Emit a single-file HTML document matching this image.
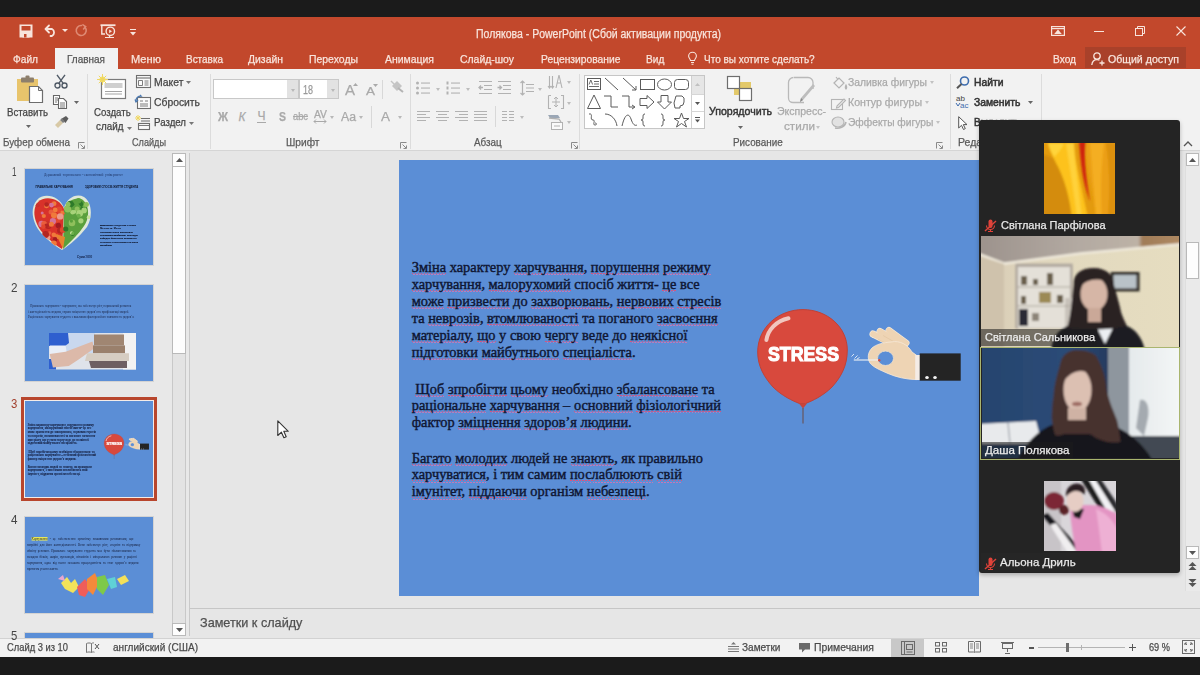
<!DOCTYPE html>
<html><head><meta charset="utf-8">
<style>
*{margin:0;padding:0;box-sizing:border-box}
html,body{width:1200px;height:675px;overflow:hidden;background:#1b1b1b;font-family:"Liberation Sans",sans-serif}
.a{position:absolute}
.t{position:absolute;white-space:nowrap;line-height:1;transform-origin:0 0;-webkit-text-stroke-width:0.25px}
svg{position:absolute;overflow:visible}
</style></head><body>
<style>
.sl{position:absolute;white-space:pre;line-height:1;font-family:'Liberation Serif',serif;font-size:14.4px;color:#0f1633;-webkit-text-stroke:0.4px #0f1633}
.u{background-image:repeating-linear-gradient(90deg,#d9537f 0 1.5px,rgba(0,0,0,0) 1.5px 3px),repeating-linear-gradient(90deg,rgba(0,0,0,0) 0 1.5px,#c07ab8 1.5px 3px);background-size:100% 1.2px,100% 1.2px;background-position:0 calc(100% - 1.6px),0 calc(100% - 0.4px);background-repeat:no-repeat;padding-bottom:0.8px}
</style>
<div class="a" style="left:0;top:17px;width:1200px;height:52px;background:#c2482c"></div>
<div class="a" style="left:55px;top:48px;width:63px;height:22px;background:#f2f2f2"></div>
<div class="a" style="left:1085px;top:47px;width:101px;height:21px;background:#a9412a"></div>
<div class="a" style="left:0;top:69px;width:1200px;height:82px;background:#f2f2f2;border-bottom:1px solid #d5d5d5"></div>
<div class="a" style="left:0;top:151px;width:190px;height:487px;background:#e8e8e8"></div>
<div class="a" style="left:190px;top:151px;width:1010px;height:487px;background:#e6e6e6"></div>
<div class="a" style="left:0;top:638px;width:1200px;height:19px;background:#f2f2f2;border-top:1px solid #d2d2d2"></div>
<svg style="left:19px;top:24px" width="14" height="14" viewBox="0 0 14 14">
<rect x="0.5" y="0.5" width="13" height="13" fill="#f8e4dc"/>
<rect x="2.5" y="2" width="9" height="4.5" fill="#c2482c"/>
<rect x="3.5" y="9" width="7" height="4.5" fill="#f8e4dc"/>
<rect x="5" y="10" width="2.5" height="3.5" fill="#c2482c"/>
</svg>
<svg style="left:44px;top:24px" width="14" height="13" viewBox="0 0 14 13" fill="none" stroke="#f8e4dc" stroke-width="1.8" stroke-linecap="round" stroke-linejoin="round">
<path d="M5 1.5L1.5 5L5 8.5"/><path d="M1.8 5H8a4 4 0 0 1 0 7H6.5"/></svg>
<svg style="left:62px;top:29px" width="6" height="3" viewBox="0 0 6 3"><path d="M0 0H6L3 3z" fill="#f8e4dc"/></svg>
<svg style="left:75px;top:24px" width="13" height="13" viewBox="0 0 13 13" fill="none" stroke="#df8a74" stroke-width="1.6" stroke-linecap="round">
<path d="M9.8 3A5 5 0 1 1 6.5 1.5"/><path d="M8 0.8L10.6 2.6L8.6 5"/></svg>
<svg style="left:100px;top:24px" width="16" height="15" viewBox="0 0 16 15" fill="none" stroke="#f8e4dc" stroke-width="1.4">
<path d="M0.5 1.2H15.5" stroke-width="1.8"/><path d="M1.8 1.5V10H5"/><circle cx="10.3" cy="7.3" r="4.2"/><path d="M9.2 5.4V9.2L12 7.3z" fill="#f8e4dc" stroke="none"/><path d="M5 13.5H14M9.5 11.5V13.5" stroke-width="1.2"/></svg>
<svg style="left:130px;top:29px" width="6" height="7" viewBox="0 0 6 7"><path d="M0 0.5H6" stroke="#f8e4dc" stroke-width="1"/><path d="M0 3H6L3 6.5z" fill="#f8e4dc"/></svg>
<span class="t" style="left:476.3px;top:28.14px;font-size:12px;color:#f8e4dc;font-weight:400;font-family:'Liberation Sans',sans-serif;transform:scaleX(0.8753);">Полякова - PowerPoint (Сбой активации продукта)</span>
<svg style="left:1051px;top:26px" width="14" height="10" viewBox="0 0 14 10" fill="none" stroke="#f8e4dc" stroke-width="1.2">
<rect x="0.6" y="0.6" width="12.8" height="8.8"/><path d="M0.6 2.6H13.4"/><path d="M4.5 7.5L7 4.5L9.5 7.5z" fill="#f8e4dc"/></svg>
<div class="a" style="left:1094px;top:31px;width:10px;height:1px;background:#f8e4dc"></div>
<svg style="left:1135px;top:26px" width="10" height="10" viewBox="0 0 10 10" fill="none" stroke="#f8e4dc" stroke-width="1">
<rect x="0.5" y="2.5" width="7" height="7"/><path d="M2.5 2.5V0.5H9.5V7.5H7.5"/></svg>
<svg style="left:1176px;top:26px" width="10" height="10" viewBox="0 0 10 10" stroke="#f8e4dc" stroke-width="1.1"><path d="M0.5 0.5L9.5 9.5M9.5 0.5L0.5 9.5"/></svg>
<span class="t" style="left:13.0px;top:53.99px;font-size:11px;color:#f8e4dc;font-weight:400;font-family:'Liberation Sans',sans-serif;transform:scaleX(0.9243);">Файл</span>
<span class="t" style="left:67.0px;top:53.99px;font-size:11px;color:#555555;font-weight:400;font-family:'Liberation Sans',sans-serif;transform:scaleX(0.9075);">Главная</span>
<span class="t" style="left:131.0px;top:53.99px;font-size:11px;color:#f8e4dc;font-weight:400;font-family:'Liberation Sans',sans-serif;transform:scaleX(1.0089);">Меню</span>
<span class="t" style="left:186.0px;top:53.99px;font-size:11px;color:#f8e4dc;font-weight:400;font-family:'Liberation Sans',sans-serif;transform:scaleX(0.9049);">Вставка</span>
<span class="t" style="left:248.0px;top:53.99px;font-size:11px;color:#f8e4dc;font-weight:400;font-family:'Liberation Sans',sans-serif;transform:scaleX(0.9463);">Дизайн</span>
<span class="t" style="left:309.0px;top:53.99px;font-size:11px;color:#f8e4dc;font-weight:400;font-family:'Liberation Sans',sans-serif;transform:scaleX(0.9494);">Переходы</span>
<span class="t" style="left:384.5px;top:53.99px;font-size:11px;color:#f8e4dc;font-weight:400;font-family:'Liberation Sans',sans-serif;transform:scaleX(0.9489);">Анимация</span>
<span class="t" style="left:460.0px;top:53.99px;font-size:11px;color:#f8e4dc;font-weight:400;font-family:'Liberation Sans',sans-serif;transform:scaleX(0.9468);">Слайд-шоу</span>
<span class="t" style="left:540.5px;top:53.99px;font-size:11px;color:#f8e4dc;font-weight:400;font-family:'Liberation Sans',sans-serif;transform:scaleX(0.9358);">Рецензирование</span>
<span class="t" style="left:645.5px;top:53.99px;font-size:11px;color:#f8e4dc;font-weight:400;font-family:'Liberation Sans',sans-serif;transform:scaleX(0.9193);">Вид</span>
<span class="t" style="left:704.3px;top:53.99px;font-size:11px;color:#f8e4dc;font-weight:400;font-family:'Liberation Sans',sans-serif;transform:scaleX(0.9103);">Что вы хотите сделать?</span>
<svg style="left:688px;top:52px" width="9" height="13" viewBox="0 0 9 13" fill="none" stroke="#f8e4dc" stroke-width="1.1">
<path d="M2.5 8.5C2.3 6.8 0.6 5.9 0.6 4.1A3.9 3.9 0 0 1 8.4 4.1C8.4 5.9 6.7 6.8 6.5 8.5z"/><path d="M3 10.5H6M3.5 12.2H5.5"/></svg>
<span class="t" style="left:1053.0px;top:53.99px;font-size:11px;color:#f8e4dc;font-weight:400;font-family:'Liberation Sans',sans-serif;transform:scaleX(0.9240);">Вход</span>
<span class="t" style="left:1107.5px;top:53.99px;font-size:11px;color:#f8e4dc;font-weight:400;font-family:'Liberation Sans',sans-serif;transform:scaleX(0.9607);">Общий доступ</span>
<svg style="left:1091px;top:52px" width="14" height="14" viewBox="0 0 14 14" fill="none" stroke="#f8e4dc" stroke-width="1.3">
<circle cx="6" cy="4" r="3.2"/><path d="M0.8 13C1.2 9.5 3.3 7.6 6 7.6C7 7.6 7.8 7.8 8.5 8.3"/><path d="M11 8.5V13.5M8.5 11H13.5"/></svg>
<div class="a" style="left:87px;top:74px;width:1px;height:75px;background:#dcdcdc"></div>
<div class="a" style="left:210px;top:74px;width:1px;height:75px;background:#dcdcdc"></div>
<div class="a" style="left:410px;top:74px;width:1px;height:75px;background:#dcdcdc"></div>
<div class="a" style="left:579px;top:74px;width:1px;height:75px;background:#dcdcdc"></div>
<div class="a" style="left:950px;top:74px;width:1px;height:75px;background:#dcdcdc"></div>
<div class="a" style="left:1041px;top:74px;width:1px;height:75px;background:#dcdcdc"></div>
<svg style="left:16px;top:75px" width="28" height="29" viewBox="0 0 28 29">
<rect x="1" y="4" width="21" height="22" fill="#e8c46c"/>
<rect x="5" y="2.5" width="13" height="5" rx="1" fill="#8d7f6c"/>
<rect x="9.5" y="0.5" width="4" height="3" rx="1" fill="#8d7f6c"/>
<path d="M13.5 11.5H22.5L26.5 15.5V27.5H13.5z" fill="#fff" stroke="#6d6d6d" stroke-width="1.2"/>
<path d="M22.5 11.5V15.5H26.5" fill="none" stroke="#6d6d6d" stroke-width="1"/>
</svg>
<span class="t" style="left:6.8px;top:106.69px;font-size:11px;color:#444444;font-weight:400;font-family:'Liberation Sans',sans-serif;transform:scaleX(0.8791);">Вставить</span>
<svg style="left:25.5px;top:125.0px" width="5" height="3" viewBox="0 0 5 3"><path d="M0 0H5L2.5 3z" fill="#666"/></svg>
<svg style="left:54px;top:74px" width="14" height="15" viewBox="0 0 14 15" fill="none" stroke="#505a66" stroke-width="1.4">
<circle cx="3.5" cy="11.5" r="2.5"/><circle cx="10.5" cy="11.5" r="2.5"/><path d="M4.8 9.3L11 0.8M9.2 9.3L3 0.8"/></svg>
<svg style="left:53px;top:95px" width="15" height="14" viewBox="0 0 15 14" fill="none" stroke="#666" stroke-width="1.1">
<path d="M0.5 0.5H6.5V9.5H0.5z" fill="#fff"/><path d="M5.5 3.5H10.5L13.5 6.5V13.5H5.5z" fill="#fff"/><path d="M7 8H12M7 10H12M7 12H12M2 3H5M2 5H5M2 7H4" stroke-width="0.9"/></svg>
<svg style="left:74.0px;top:101.0px" width="5" height="3" viewBox="0 0 5 3"><path d="M0 0H5L2.5 3z" fill="#666"/></svg>
<svg style="left:54px;top:116px" width="15" height="12" viewBox="0 0 15 12">
<path d="M1 9L6 4L9 7L4 12z" fill="#d8c9a6"/><path d="M7 3L12 0L14.5 2.5L11.5 7z" fill="#5c5c5c"/><path d="M6 4L8 2.5L11 5.5L9 7z" fill="#7d7d7d"/></svg>
<span class="t" style="left:3.0px;top:137.19px;font-size:11px;color:#5a5a5a;font-weight:400;font-family:'Liberation Sans',sans-serif;transform:scaleX(0.8963);">Буфер обмена</span>
<svg style="left:78px;top:142px" width="7" height="7" viewBox="0 0 7 7" fill="none" stroke="#8a8a8a" stroke-width="1"><path d="M0.5 6.5V0.5H6.5"/><path d="M2.5 2.5L6 6M3.5 6.5H6.5V3.5"/></svg>
<svg style="left:97px;top:74px" width="30" height="26" viewBox="0 0 30 26">
<rect x="4.5" y="5.5" width="24" height="19" fill="#fff" stroke="#7a7a7a" stroke-width="1.2"/>
<rect x="7.5" y="9" width="18" height="5" fill="#cfcfcf"/>
<path d="M8 17.5H25M8 20H25" stroke="#9a9a9a" stroke-width="0.9"/>
<circle cx="5.5" cy="5.5" r="3" fill="#f3de6a"/>
<path d="M5.5 0V11M0 5.5H11M1.8 1.8L9.2 9.2M9.2 1.8L1.8 9.2" stroke="#efd760" stroke-width="1"/>
</svg>
<span class="t" style="left:93.7px;top:106.69px;font-size:11px;color:#444444;font-weight:400;font-family:'Liberation Sans',sans-serif;transform:scaleX(0.8777);">Создать</span>
<span class="t" style="left:95.6px;top:120.69px;font-size:11px;color:#444444;font-weight:400;font-family:'Liberation Sans',sans-serif;transform:scaleX(0.8952);">слайд</span>
<svg style="left:126.5px;top:127.0px" width="5" height="3" viewBox="0 0 5 3"><path d="M0 0H5L2.5 3z" fill="#777"/></svg>
<svg style="left:136px;top:75px" width="15" height="13" viewBox="0 0 15 13" fill="none" stroke="#6e6e6e" stroke-width="1.1">
<rect x="0.5" y="0.5" width="14" height="12" fill="#fafafa"/><path d="M0.5 3H14.5"/><path d="M2.5 5.5H6.5V10.5H2.5zM8.5 6H12.5M8.5 8H12.5M8.5 10H12.5" stroke-width="0.9"/></svg>
<span class="t" style="left:153.5px;top:76.69px;font-size:11px;color:#444444;font-weight:400;font-family:'Liberation Sans',sans-serif;transform:scaleX(0.9473);">Макет</span>
<svg style="left:186.0px;top:81.0px" width="5" height="3" viewBox="0 0 5 3"><path d="M0 0H5L2.5 3z" fill="#777"/></svg>
<svg style="left:135px;top:95px" width="16" height="14" viewBox="0 0 16 14" fill="none" stroke="#6e6e6e" stroke-width="1.1">
<rect x="2.5" y="2.5" width="13" height="11" fill="#fafafa"/><path d="M5 6H8M10 6H13M5 9H13M5 11H13" stroke-width="0.9"/>
<path d="M0.8 6.5C0.8 3 3 1 6 1L5 0" stroke="#4a78b0" stroke-width="1.3"/><path d="M0 4.5L1 7L3 5" stroke="#4a78b0" stroke-width="1.2"/></svg>
<span class="t" style="left:153.5px;top:96.69px;font-size:11px;color:#444444;font-weight:400;font-family:'Liberation Sans',sans-serif;transform:scaleX(0.9406);">Сбросить</span>
<svg style="left:135px;top:115px" width="16" height="15" viewBox="0 0 16 15" fill="none">
<path d="M3 0V6M0 3H6M1 1L5 5M5 1L1 5" stroke="#efd760" stroke-width="1"/>
<path d="M6 3.5H15M6 6H15" stroke="#6e6e6e" stroke-width="1.1"/>
<rect x="3.5" y="8.5" width="11" height="6" fill="#fafafa" stroke="#6e6e6e" stroke-width="1.1"/><path d="M3.5 10.5H14.5" stroke="#6e6e6e" stroke-width="0.9"/></svg>
<span class="t" style="left:153.5px;top:117.39px;font-size:11px;color:#444444;font-weight:400;font-family:'Liberation Sans',sans-serif;transform:scaleX(0.8801);">Раздел</span>
<svg style="left:189.0px;top:122.0px" width="5" height="3" viewBox="0 0 5 3"><path d="M0 0H5L2.5 3z" fill="#777"/></svg>
<span class="t" style="left:132.0px;top:137.39px;font-size:11px;color:#5a5a5a;font-weight:400;font-family:'Liberation Sans',sans-serif;transform:scaleX(0.8302);">Слайды</span>
<div class="a" style="left:213px;top:79px;width:86px;height:20px;background:#fff;border:1px solid #c8c8c8"></div>
<div class="a" style="left:287px;top:80px;width:11px;height:18px;background:#e2e2e2"></div>
<div class="a" style="left:299px;top:79px;width:40px;height:20px;background:#fff;border:1px solid #c8c8c8;border-left:none"></div>
<div class="a" style="left:327px;top:80px;width:11px;height:18px;background:#e2e2e2"></div>
<div class="a" style="left:299px;top:79px;width:1px;height:20px;background:#c8c8c8"></div>
<svg style="left:290.5px;top:89.0px" width="4" height="3" viewBox="0 0 4 3"><path d="M0 0H4L2.0 3z" fill="#b8b8b8"/></svg>
<svg style="left:330.5px;top:89.0px" width="4" height="3" viewBox="0 0 4 3"><path d="M0 0H4L2.0 3z" fill="#b8b8b8"/></svg>
<span class="t" style="left:303.0px;top:84.34px;font-size:12px;color:#999999;font-weight:400;font-family:'Liberation Sans',sans-serif;transform:scaleX(0.7485);">18</span>
<span class="t" style="left:345.0px;top:83.15px;font-size:14px;color:#a9a9a9;font-weight:400;font-family:'Liberation Sans',sans-serif;transform:scaleX(1.0702);">A</span>
<svg style="left:353px;top:83px" width="5" height="3"><path d="M0 3L2.5 0L5 3z" fill="#a9a9a9"/></svg>
<span class="t" style="left:366.0px;top:85.69px;font-size:11px;color:#a9a9a9;font-weight:400;font-family:'Liberation Sans',sans-serif;transform:scaleX(1.2255);">A</span>
<svg style="left:373px;top:84px" width="5" height="3"><path d="M0 0L2.5 3L5 0z" fill="#a9a9a9"/></svg>
<div class="a" style="left:382px;top:80px;width:1px;height:19px;background:#d8d8d8"></div>
<svg style="left:390px;top:80px" width="14" height="13" viewBox="0 0 14 13"><path d="M2 6L7 1L12 6L7 11z" fill="#c4c4c4"/><path d="M1 1L5 5" stroke="#c4c4c4" stroke-width="1.5"/><path d="M8 8L13 12" stroke="#b4b4b4" stroke-width="2"/></svg>
<span class="t" style="left:218.0px;top:110.84px;font-size:12px;color:#a9a9a9;font-weight:700;font-family:'Liberation Sans',sans-serif;transform:scaleX(0.9209);">Ж</span>
<span class="t" style="left:238.5px;top:110.84px;font-size:12px;color:#a9a9a9;font-weight:400;font-family:'Liberation Sans',sans-serif;transform:scaleX(1.0000);font-style:italic;">К</span>
<span class="t" style="left:257.5px;top:109.84px;font-size:12px;color:#a9a9a9;font-weight:400;font-family:'Liberation Sans',sans-serif;transform:scaleX(1.0000);">Ч</span>
<div class="a" style="left:257px;top:122px;width:9px;height:1px;background:#a9a9a9"></div>
<span class="t" style="left:278.5px;top:110.84px;font-size:12px;color:#a9a9a9;font-weight:700;font-family:'Liberation Sans',sans-serif;transform:scaleX(0.8733);">S</span>
<span class="t" style="left:293.0px;top:111.53px;font-size:10px;color:#a9a9a9;font-weight:400;font-family:'Liberation Sans',sans-serif;transform:scaleX(0.9302);">abc</span>
<div class="a" style="left:293px;top:116px;width:15px;height:1px;background:#a9a9a9"></div>
<span class="t" style="left:313.5px;top:109.53px;font-size:10px;color:#a9a9a9;font-weight:400;font-family:'Liberation Sans',sans-serif;transform:scaleX(1.0310);">AV</span>
<svg style="left:313px;top:119px" width="14" height="5" viewBox="0 0 14 5" fill="none" stroke="#a9a9a9" stroke-width="1"><path d="M1 2.5H13M3 0.5L1 2.5L3 4.5M11 0.5L13 2.5L11 4.5"/></svg>
<svg style="left:329.5px;top:116.0px" width="4" height="3" viewBox="0 0 4 3"><path d="M0 0H4L2.0 3z" fill="#b8b8b8"/></svg>
<span class="t" style="left:341.0px;top:110.84px;font-size:12px;color:#a9a9a9;font-weight:400;font-family:'Liberation Sans',sans-serif;transform:scaleX(1.0213);">Aa</span>
<svg style="left:359.0px;top:116.0px" width="4" height="3" viewBox="0 0 4 3"><path d="M0 0H4L2.0 3z" fill="#b8b8b8"/></svg>
<div class="a" style="left:371px;top:106px;width:1px;height:22px;background:#d8d8d8"></div>
<span class="t" style="left:381.0px;top:109.99px;font-size:13px;color:#a9a9a9;font-weight:400;font-family:'Liberation Sans',sans-serif;transform:scaleX(1.0378);">A</span>
<svg style="left:398.0px;top:116.0px" width="4" height="3" viewBox="0 0 4 3"><path d="M0 0H4L2.0 3z" fill="#b8b8b8"/></svg>
<span class="t" style="left:286.0px;top:137.29px;font-size:11px;color:#5a5a5a;font-weight:400;font-family:'Liberation Sans',sans-serif;transform:scaleX(0.9253);">Шрифт</span>
<svg style="left:400px;top:142px" width="7" height="7" viewBox="0 0 7 7" fill="none" stroke="#8a8a8a" stroke-width="1"><path d="M0.5 6.5V0.5H6.5"/><path d="M2.5 2.5L6 6M3.5 6.5H6.5V3.5"/></svg>
<svg style="left:416px;top:81px" width="14" height="14" viewBox="0 0 14 14" fill="#b2b2b2"><circle cx="1.5" cy="2" r="1.5"/><circle cx="1.5" cy="7" r="1.5"/><circle cx="1.5" cy="12" r="1.5"/><rect x="5" y="1.5" width="9" height="1.1"/><rect x="5" y="6.5" width="9" height="1.1"/><rect x="5" y="11.5" width="9" height="1.1"/></svg>
<svg style="left:436.0px;top:88.0px" width="4" height="3" viewBox="0 0 4 3"><path d="M0 0H4L2.0 3z" fill="#bdbdbd"/></svg>
<svg style="left:446px;top:81px" width="14" height="14" viewBox="0 0 14 14" fill="#b2b2b2"><rect x="0.5" y="0.5" width="2" height="3"/><rect x="0.5" y="5.5" width="2" height="3"/><rect x="0.5" y="10.5" width="2" height="3"/><rect x="5" y="1.5" width="9" height="1.1"/><rect x="5" y="6.5" width="9" height="1.1"/><rect x="5" y="11.5" width="9" height="1.1"/></svg>
<svg style="left:466.0px;top:88.0px" width="4" height="3" viewBox="0 0 4 3"><path d="M0 0H4L2.0 3z" fill="#bdbdbd"/></svg>
<svg style="left:478px;top:81px" width="15" height="13" viewBox="0 0 15 13" fill="none" stroke="#b2b2b2" stroke-width="1.1"><path d="M1 0.5H14M6 4.5H14M6 8.5H14M1 12.5H14"/><path d="M5 6.5H0.8M3 4.5L1 6.5L3 8.5" stroke-width="1.3"/></svg>
<svg style="left:497px;top:81px" width="15" height="13" viewBox="0 0 15 13" fill="none" stroke="#b2b2b2" stroke-width="1.1"><path d="M1 0.5H14M6 4.5H14M6 8.5H14M1 12.5H14"/><path d="M0.5 6.5H4.5M2.5 4.5L4.5 6.5L2.5 8.5" stroke-width="1.3"/></svg>
<svg style="left:520px;top:80px" width="15" height="16" viewBox="0 0 15 16" fill="none" stroke="#b2b2b2" stroke-width="1.1"><path d="M6 4.5H14M6 8H14M6 11.5H14"/><path d="M2.5 1V15M0.5 3L2.5 1L4.5 3M0.5 13L2.5 15L4.5 13" stroke-width="1.2"/></svg>
<svg style="left:538.0px;top:88.0px" width="4" height="3" viewBox="0 0 4 3"><path d="M0 0H4L2.0 3z" fill="#bdbdbd"/></svg>
<svg style="left:548px;top:74px" width="15" height="15" viewBox="0 0 15 15" fill="none" stroke="#b2b2b2" stroke-width="1.1"><path d="M1.5 2V14M4.5 2V14M0 12L1.5 14L3 12M3 12L4.5 14L6 12"/><path d="M8 14L11 1L14 14M9 9H13"/></svg>
<svg style="left:567.0px;top:81.0px" width="4" height="3" viewBox="0 0 4 3"><path d="M0 0H4L2.0 3z" fill="#bdbdbd"/></svg>
<svg style="left:548px;top:95px" width="16" height="14" viewBox="0 0 16 14" fill="none" stroke="#b2b2b2" stroke-width="1.1"><path d="M0.5 0.5H3M13 0.5H15.5V13.5H13M3 13.5H0.5V0.5" /><path d="M8 2V12M6 4L8 2L10 4M6 10L8 12L10 10M4 7H12" stroke-width="1"/></svg>
<svg style="left:567.0px;top:102.0px" width="4" height="3" viewBox="0 0 4 3"><path d="M0 0H4L2.0 3z" fill="#bdbdbd"/></svg>
<svg style="left:547px;top:114px" width="16" height="16" viewBox="0 0 16 16"><path d="M1 1H11L13 4H3z" fill="#9aa6b5"/><path d="M2 4L12 5L14 8" fill="none" stroke="#b0b0b0" stroke-width="1.3"/><rect x="4.5" y="8.5" width="11" height="7" fill="#fafafa" stroke="#b2b2b2" stroke-width="1"/><path d="M7 12H13" stroke="#b2b2b2"/></svg>
<svg style="left:567.0px;top:121.0px" width="4" height="3" viewBox="0 0 4 3"><path d="M0 0H4L2.0 3z" fill="#bdbdbd"/></svg>
<div class="a" style="left:417.0px;top:111.0px;width:13.0px;height:1.1px;background:#b2b2b2"></div><div class="a" style="left:417.0px;top:114.0px;width:9.0px;height:1.1px;background:#b2b2b2"></div><div class="a" style="left:417.0px;top:117.0px;width:13.0px;height:1.1px;background:#b2b2b2"></div><div class="a" style="left:417.0px;top:120.0px;width:9.0px;height:1.1px;background:#b2b2b2"></div>
<div class="a" style="left:436.0px;top:111.0px;width:13.0px;height:1.1px;background:#b2b2b2"></div><div class="a" style="left:438.0px;top:114.0px;width:9.0px;height:1.1px;background:#b2b2b2"></div><div class="a" style="left:436.0px;top:117.0px;width:13.0px;height:1.1px;background:#b2b2b2"></div><div class="a" style="left:438.0px;top:120.0px;width:9.0px;height:1.1px;background:#b2b2b2"></div>
<div class="a" style="left:455.0px;top:111.0px;width:13.0px;height:1.1px;background:#b2b2b2"></div><div class="a" style="left:459.0px;top:114.0px;width:9.0px;height:1.1px;background:#b2b2b2"></div><div class="a" style="left:455.0px;top:117.0px;width:13.0px;height:1.1px;background:#b2b2b2"></div><div class="a" style="left:459.0px;top:120.0px;width:9.0px;height:1.1px;background:#b2b2b2"></div>
<div class="a" style="left:474.0px;top:111.0px;width:13.0px;height:1.1px;background:#b2b2b2"></div><div class="a" style="left:474.0px;top:114.0px;width:13.0px;height:1.1px;background:#b2b2b2"></div><div class="a" style="left:474.0px;top:117.0px;width:13.0px;height:1.1px;background:#b2b2b2"></div><div class="a" style="left:474.0px;top:120.0px;width:13.0px;height:1.1px;background:#b2b2b2"></div>
<div class="a" style="left:495px;top:106px;width:1px;height:21px;background:#d8d8d8"></div>
<div class="a" style="left:502.0px;top:111.0px;width:5.0px;height:1.1px;background:#b2b2b2"></div><div class="a" style="left:502.0px;top:114.0px;width:5.0px;height:1.1px;background:#b2b2b2"></div><div class="a" style="left:502.0px;top:117.0px;width:5.0px;height:1.1px;background:#b2b2b2"></div><div class="a" style="left:502.0px;top:120.0px;width:5.0px;height:1.1px;background:#b2b2b2"></div>
<div class="a" style="left:509.0px;top:111.0px;width:5.0px;height:1.1px;background:#b2b2b2"></div><div class="a" style="left:509.0px;top:114.0px;width:5.0px;height:1.1px;background:#b2b2b2"></div><div class="a" style="left:509.0px;top:117.0px;width:5.0px;height:1.1px;background:#b2b2b2"></div><div class="a" style="left:509.0px;top:120.0px;width:5.0px;height:1.1px;background:#b2b2b2"></div>
<svg style="left:520.0px;top:116.0px" width="4" height="3" viewBox="0 0 4 3"><path d="M0 0H4L2.0 3z" fill="#bdbdbd"/></svg>
<span class="t" style="left:473.6px;top:137.39px;font-size:11px;color:#5a5a5a;font-weight:400;font-family:'Liberation Sans',sans-serif;transform:scaleX(0.8976);">Абзац</span>
<svg style="left:571px;top:142px" width="7" height="7" viewBox="0 0 7 7" fill="none" stroke="#8a8a8a" stroke-width="1"><path d="M0.5 6.5V0.5H6.5"/><path d="M2.5 2.5L6 6M3.5 6.5H6.5V3.5"/></svg>
<div class="a" style="left:584px;top:75px;width:121px;height:54px;background:#fff;border:1px solid #c6c6c6"></div>
<div class="a" style="left:691px;top:76px;width:13px;height:18px;background:#e6e6e6"></div>
<div class="a" style="left:691px;top:76px;width:1px;height:52px;background:#d0d0d0"></div>
<div class="a" style="left:691px;top:94px;width:13px;height:1px;background:#d6d6d6"></div>
<div class="a" style="left:691px;top:111px;width:13px;height:1px;background:#d6d6d6"></div>
<svg style="left:695px;top:83px" width="5" height="3"><path d="M0 3L2.5 0L5 3z" fill="#c0c0c0"/></svg>
<svg style="left:695.0px;top:101.5px" width="5" height="3" viewBox="0 0 5 3"><path d="M0 0H5L2.5 3z" fill="#555"/></svg>
<svg style="left:695px;top:117px" width="5" height="6"><path d="M0 0.5H5" stroke="#555" stroke-width="1"/><path d="M0 2.5H5L2.5 5.5z" fill="#555"/></svg>
<svg style="left:585px;top:76px" width="105" height="52" viewBox="0 0 105 52" fill="none" stroke="#5b5b5b" stroke-width="1">
<rect x="2.5" y="2.5" width="13" height="11"/><path d="M9 5.5H14M9 8H14M4 10.5H14" stroke-width="0.9"/><path d="M4 8.5L5.8 4L7.6 8.5" stroke-width="0.9"/>
<path d="M20 2L33 14"/>
<path d="M38 2L51 14M47 14H51V10"/>
<rect x="55.5" y="3.5" width="14" height="10"/>
<ellipse cx="79.5" cy="8.5" rx="7" ry="5.5"/>
<rect x="89.5" y="3.5" width="14" height="10" rx="3"/>
<path d="M2.5 32.5L9 19L15.5 32.5z"/>
<path d="M19 20H26V31H33"/>
<path d="M37 20H44V31H49M47 29L50 31L47 33"/>
<path d="M55 22.5H62V19.5L69 26L62 32.5V29.5H55z"/>
<path d="M76 19.5H83V26H86.5L79.5 33L72.5 26H76z"/>
<path d="M91 20H97L99 22V26A4 4 0 0 1 95 30V32H90L89 27z"/>
<path d="M4 38C9 37 4 44 8 44C11 44 7 49 10 49C12 49 12 47 10 47" />
<path d="M20 38C26 38 31 43 32 50"/>
<path d="M37 50C40 37 44 37 46 43C48 49 50 50 52 49"/>
<path d="M60 38C58 38 58 39 58 42C58 44 57 44 56 44C57 44 58 44 58 46C58 49 58 50 60 50"/>
<path d="M76 38C78 38 78 39 78 42C78 44 79 44 80 44C79 44 78 44 78 46C78 49 78 50 76 50"/>
<path d="M96.5 37L98.5 42.5H104L99.5 45.5L101.5 51L96.5 47.5L91.5 51L93.5 45.5L89 42.5H94.5z"/>
</svg>
<svg style="left:726px;top:75px" width="28" height="27" viewBox="0 0 28 27">
<rect x="8" y="7" width="17" height="13" fill="#e3c96a"/>
<rect x="1.5" y="1.5" width="12" height="12" fill="#fff" stroke="#6e6e6e" stroke-width="1.2"/>
<rect x="13.5" y="13.5" width="12" height="12" fill="#fff" stroke="#6e6e6e" stroke-width="1.2"/>
</svg>
<span class="t" style="left:709.0px;top:106.49px;font-size:11px;color:#333;font-weight:400;font-family:'Liberation Sans',sans-serif;transform:scaleX(0.9623);-webkit-text-stroke-width:0.45px;">Упорядочить</span>
<svg style="left:737.5px;top:126.0px" width="5" height="3" viewBox="0 0 5 3"><path d="M0 0H5L2.5 3z" fill="#666"/></svg>
<svg style="left:787px;top:76px" width="30" height="28" viewBox="0 0 30 28" fill="none">
<path d="M7 1.5H21A5 5 0 0 1 26 6.5V13M17 26.5H6A4.5 4.5 0 0 1 1.5 22V6.5A5 5 0 0 1 6.5 1.5" stroke="#b9b9b9" stroke-width="1.3"/>
<path d="M28 10L16 24L13 26L14 22L26 8z" fill="#bdbdbd"/><path d="M16 24L13 26L14 22" fill="#8a8a8a"/></svg>
<span class="t" style="left:776.5px;top:106.49px;font-size:11px;color:#a9a9a9;font-weight:400;font-family:'Liberation Sans',sans-serif;transform:scaleX(0.9570);">Экспресс-</span>
<span class="t" style="left:784.0px;top:120.69px;font-size:11px;color:#a9a9a9;font-weight:400;font-family:'Liberation Sans',sans-serif;transform:scaleX(1.0598);">стили</span>
<svg style="left:816.0px;top:126.0px" width="4" height="3" viewBox="0 0 4 3"><path d="M0 0H4L2.0 3z" fill="#c2c2c2"/></svg>
<svg style="left:832px;top:77px" width="16" height="13" viewBox="0 0 16 13" fill="none" stroke="#b4b4b4" stroke-width="1.2"><path d="M2 6L7 1L12 6L7 11z"/><path d="M4 0L6 2.5"/><path d="M14 8C15 10 15 11 14 12C13 11 13 10 14 8z" fill="#c6c6c6"/></svg>
<span class="t" style="left:847.7px;top:76.89px;font-size:11px;color:#a9a9a9;font-weight:400;font-family:'Liberation Sans',sans-serif;transform:scaleX(0.9403);">Заливка фигуры</span>
<svg style="left:930.0px;top:81.0px" width="4" height="3" viewBox="0 0 4 3"><path d="M0 0H4L2.0 3z" fill="#c2c2c2"/></svg>
<svg style="left:831px;top:97px" width="15" height="13" viewBox="0 0 15 13" fill="none" stroke="#b4b4b4" stroke-width="1.1"><rect x="0.5" y="2.5" width="11" height="10"/><path d="M6 9L13 2L14.5 3.5L7.5 10.5L5.5 11z" fill="#f2f2f2"/></svg>
<span class="t" style="left:847.7px;top:96.69px;font-size:11px;color:#a9a9a9;font-weight:400;font-family:'Liberation Sans',sans-serif;transform:scaleX(0.9620);">Контур фигуры</span>
<svg style="left:925.0px;top:101.0px" width="4" height="3" viewBox="0 0 4 3"><path d="M0 0H4L2.0 3z" fill="#c2c2c2"/></svg>
<svg style="left:831px;top:116px" width="16" height="13" viewBox="0 0 16 13"><ellipse cx="7" cy="6" rx="6" ry="5" fill="#e2e2e2" stroke="#b4b4b4" stroke-width="1.1"/><path d="M4 12C8 13 14 11 15 6" stroke="#b4b4b4" stroke-width="1.6" fill="none"/></svg>
<span class="t" style="left:847.7px;top:116.69px;font-size:11px;color:#a9a9a9;font-weight:400;font-family:'Liberation Sans',sans-serif;transform:scaleX(0.9305);">Эффекты фигуры</span>
<svg style="left:936.0px;top:121.0px" width="4" height="3" viewBox="0 0 4 3"><path d="M0 0H4L2.0 3z" fill="#c2c2c2"/></svg>
<span class="t" style="left:732.5px;top:136.69px;font-size:11px;color:#5a5a5a;font-weight:400;font-family:'Liberation Sans',sans-serif;transform:scaleX(0.8970);">Рисование</span>
<svg style="left:936px;top:142px" width="7" height="7" viewBox="0 0 7 7" fill="none" stroke="#8a8a8a" stroke-width="1"><path d="M0.5 6.5V0.5H6.5"/><path d="M2.5 2.5L6 6M3.5 6.5H6.5V3.5"/></svg>
<svg style="left:956px;top:76px" width="14" height="13" viewBox="0 0 14 13" fill="none" stroke="#3d6cae" stroke-width="1.6"><circle cx="8.5" cy="5" r="4"/><path d="M5.5 8L1 12.2" stroke="#555" stroke-width="2"/></svg>
<span class="t" style="left:973.5px;top:76.69px;font-size:11px;color:#333;font-weight:400;font-family:'Liberation Sans',sans-serif;transform:scaleX(0.9366);-webkit-text-stroke-width:0.55px;">Найти</span>
<svg style="left:955px;top:94px" width="16" height="15" viewBox="0 0 16 15"><text x="1" y="6.5" font-size="8" font-family="Liberation Sans" fill="#444">ab</text><text x="5" y="14" font-size="8" font-family="Liberation Sans" fill="#3d6cae">ac</text><path d="M1 9L3 12L5 9" fill="none" stroke="#3d6cae" stroke-width="1"/></svg>
<span class="t" style="left:973.5px;top:96.69px;font-size:11px;color:#333;font-weight:400;font-family:'Liberation Sans',sans-serif;transform:scaleX(0.9406);-webkit-text-stroke-width:0.55px;">Заменить</span>
<svg style="left:1028.0px;top:101.0px" width="5" height="3" viewBox="0 0 5 3"><path d="M0 0H5L2.5 3z" fill="#666"/></svg>
<svg style="left:958px;top:116px" width="10" height="14" viewBox="0 0 10 14"><path d="M0.7 0.7V12L3.5 9.3L5.5 13.5L7.3 12.6L5.3 8.6H9z" fill="#fff" stroke="#555" stroke-width="1"/></svg>
<span class="t" style="left:973.5px;top:116.69px;font-size:11px;color:#333;font-weight:400;font-family:'Liberation Sans',sans-serif;transform:scaleX(0.9064);-webkit-text-stroke-width:0.55px;">Выделить</span>
<span class="t" style="left:958.0px;top:136.69px;font-size:11px;color:#5a5a5a;font-weight:400;font-family:'Liberation Sans',sans-serif;transform:scaleX(0.9547);">Редактирование</span>
<svg style="left:1183px;top:141px" width="10" height="6" viewBox="0 0 10 6" fill="none" stroke="#555" stroke-width="1.3"><path d="M1 5L5 1L9 5"/></svg>
<div class="a" style="left:172px;top:153px;width:14px;height:483px;background:#e3e3e3;border-left:1px solid #c8c8c8;border-right:1px solid #c8c8c8"></div>
<div class="a" style="left:172px;top:153px;width:14px;height:14px;background:#fdfdfd;border:1px solid #b9b9b9"></div>
<svg style="left:175.5px;top:157.5px" width="7" height="4"><path d="M0 4L3.5 0L7 4z" fill="#555"/></svg>
<div class="a" style="left:172px;top:166px;width:14px;height:188px;background:#fdfdfd;border:1px solid #b9b9b9"></div>
<div class="a" style="left:172px;top:623px;width:14px;height:13px;background:#fdfdfd;border:1px solid #b9b9b9"></div>
<svg style="left:175.5px;top:628px" width="7" height="4"><path d="M0 0L3.5 4L7 0z" fill="#555"/></svg>
<div class="a" style="left:189px;top:153px;width:1px;height:483px;background:#c9c9c9"></div>
<div class="a" style="left:24px;top:168px;width:130px;height:98px;background:#fff;border:1px solid #d3d3d3"></div>
<div class="a" style="left:25px;top:169px;width:128px;height:96px;background:#5b8ed6"></div>
<span class="t" style="left:11.5px;top:165.27px;font-size:13.5px;color:#444;font-weight:400;font-family:'Liberation Sans',sans-serif;transform:scaleX(0.5988);-webkit-text-stroke-width:0;">1</span>
<svg style="left:25px;top:169px;overflow:hidden" width="128" height="96" viewBox="0 0 128 96"><defs><filter id="thb169" x="-5%" y="-5%" width="110%" height="110%"><feGaussianBlur stdDeviation="0.5"/></filter></defs><defs><clipPath id="hclip"><path d="M39 39C35 27 19 23 12 31C4 40 8 55 16 64C23 72 32 78 37 81C45 76 55 67 62 58C68 48 67 33 59 28C51 24 42 29 39 39z"/></clipPath></defs><g filter="url(#thb169)">



<path d="M39 39C35 27 19 23 12 31C4 40 8 55 16 64C23 72 32 78 37 81C45 76 55 67 62 58C68 48 67 33 59 28C51 24 42 29 39 39z" fill="#dfe8d8"/>
<path d="M39 40C35 29 20 26 13 33C6 41 10 55 17 63C24 71 32 77 37 80L39 40z" fill="#d8322c"/>
<path d="M39 40C43 30 54 27 59 32C65 39 64 50 59 57C53 66 45 73 38 80z" fill="#5aa03c"/>
<g clip-path="url(#hclip)"><circle cx="16.7" cy="55.0" r="3.3" fill="#d4739a"/><circle cx="23.3" cy="56.7" r="3.3" fill="#b42522"/><circle cx="23.1" cy="55.3" r="3.5" fill="#c9302a"/><circle cx="23.2" cy="68.5" r="2.3" fill="#ee9a8a"/><circle cx="34.1" cy="40.7" r="3.2" fill="#e2462e"/><circle cx="24.6" cy="64.1" r="1.8" fill="#e95d3b"/><circle cx="31.8" cy="67.9" r="2.4" fill="#f07a3a"/><circle cx="30.1" cy="70.4" r="2.3" fill="#a41f22"/><circle cx="32.4" cy="50.5" r="3.3" fill="#e2462e"/><circle cx="12.7" cy="36.3" r="2.0" fill="#c9302a"/><circle cx="28.8" cy="65.8" r="2.3" fill="#f07a3a"/><circle cx="33.3" cy="56.4" r="2.7" fill="#a41f22"/><circle cx="35.3" cy="61.4" r="3.2" fill="#b42522"/><circle cx="37.7" cy="60.9" r="2.9" fill="#e2462e"/><circle cx="19.1" cy="54.9" r="2.9" fill="#e95d3b"/><circle cx="26.1" cy="43.1" r="2.5" fill="#e95d3b"/><circle cx="27.9" cy="52.2" r="3.1" fill="#d4739a"/><circle cx="21.5" cy="36.9" r="2.4" fill="#f07a3a"/><circle cx="21.6" cy="35.5" r="2.3" fill="#b42522"/><circle cx="26.4" cy="55.3" r="2.5" fill="#f07a3a"/><circle cx="38.0" cy="44.2" r="1.7" fill="#e95d3b"/><circle cx="37.2" cy="43.4" r="1.8" fill="#f07a3a"/><circle cx="35.1" cy="47.4" r="3.2" fill="#ee9a8a"/><circle cx="29.1" cy="34.7" r="2.4" fill="#f07a3a"/><circle cx="30.2" cy="40.9" r="2.4" fill="#f07a3a"/><circle cx="17.2" cy="43.9" r="1.5" fill="#d4739a"/><circle cx="21.6" cy="56.7" r="2.3" fill="#b42522"/><circle cx="26.5" cy="36.1" r="2.4" fill="#d4739a"/><circle cx="29.0" cy="46.2" r="3.0" fill="#f07a3a"/><circle cx="28.9" cy="74.3" r="2.8" fill="#f07a3a"/><circle cx="18.4" cy="57.7" r="2.2" fill="#e2462e"/><circle cx="18.8" cy="47.0" r="2.1" fill="#f07a3a"/><circle cx="20.6" cy="65.5" r="3.4" fill="#b42522"/><circle cx="56.4" cy="35.5" r="1.9" fill="#2f7a2a"/><circle cx="59.3" cy="40.0" r="2.9" fill="#3e8a2f"/><circle cx="55.6" cy="34.1" r="2.1" fill="#2f7a2a"/><circle cx="48.0" cy="65.0" r="3.1" fill="#5aa03c"/><circle cx="57.8" cy="39.2" r="2.4" fill="#2f7a2a"/><circle cx="45.4" cy="35.1" r="3.4" fill="#2f7a2a"/><circle cx="47.6" cy="65.1" r="1.9" fill="#2f7a2a"/><circle cx="46.7" cy="63.9" r="1.7" fill="#c6e29a"/><circle cx="54.9" cy="54.8" r="2.1" fill="#5aa03c"/><circle cx="59.1" cy="41.4" r="2.8" fill="#a8d37a"/><circle cx="47.0" cy="53.9" r="3.3" fill="#8fc05b"/><circle cx="63.7" cy="48.2" r="1.9" fill="#c6e29a"/><circle cx="55.9" cy="51.8" r="2.6" fill="#a8d37a"/><circle cx="42.9" cy="40.3" r="3.3" fill="#8fc05b"/><circle cx="53.8" cy="30.6" r="1.7" fill="#c6e29a"/><circle cx="52.1" cy="40.0" r="2.5" fill="#8fc05b"/><circle cx="54.7" cy="44.3" r="3.4" fill="#a8d37a"/><circle cx="41.5" cy="39.3" r="2.6" fill="#8fc05b"/><circle cx="59.6" cy="37.2" r="2.0" fill="#6cb04a"/><circle cx="61.4" cy="35.4" r="2.5" fill="#8fc05b"/><circle cx="53.7" cy="46.8" r="2.0" fill="#6cb04a"/><circle cx="46.4" cy="52.1" r="1.6" fill="#5aa03c"/><circle cx="47.8" cy="64.4" r="1.6" fill="#6cb04a"/><circle cx="43.0" cy="35.2" r="2.5" fill="#8fc05b"/><circle cx="40.8" cy="59.9" r="2.5" fill="#2f7a2a"/><circle cx="47.6" cy="43.2" r="2.3" fill="#a8d37a"/><circle cx="49.4" cy="42.8" r="1.9" fill="#a8d37a"/><circle cx="47.9" cy="35.2" r="1.5" fill="#2f7a2a"/><circle cx="53.6" cy="31.8" r="2.7" fill="#5aa03c"/></g><path d="M31 65L38 80L40 68z" fill="#e8832f"/>


</g></svg>
<div class="a" style="left:24px;top:284px;width:130px;height:98px;background:#fff;border:1px solid #d3d3d3"></div>
<div class="a" style="left:25px;top:285px;width:128px;height:96px;background:#5b8ed6"></div>
<span class="t" style="left:10.9px;top:281.37px;font-size:13.5px;color:#444;font-weight:400;font-family:'Liberation Sans',sans-serif;transform:scaleX(0.8649);-webkit-text-stroke-width:0;">2</span>
<svg style="left:25px;top:285px;overflow:hidden" width="128" height="96" viewBox="0 0 128 96"><defs><filter id="thb285" x="-5%" y="-5%" width="110%" height="110%"><feGaussianBlur stdDeviation="0.5"/></filter></defs><g filter="url(#thb285)">

<rect x="24" y="48" width="87" height="36.5" fill="#dfe3ea"/>
<rect x="40" y="48" width="30" height="20" fill="#c9d8ee"/>
<rect x="98" y="48" width="13" height="36.5" fill="#f2f2f2"/>
<path d="M24 48H43L44 58L40 61H24z" fill="#2d5ecf"/>
<path d="M24 74H31V84.5H24z" fill="#2d5ecf"/>
<path d="M24.8 60.4H40.6L42 69H24.8z" fill="#e9eef7"/>
<path d="M24.75 69.1L40.6 66.75L67.5 56.5L69 63.6L53.25 74.7L43.75 81L27.9 82.6z" fill="#dcb9a9"/>
<rect x="69" y="49.5" width="30" height="10.9" fill="#a08672"/>
<rect x="68" y="60.4" width="32" height="7.9" fill="#9a806c"/>
<path d="M62 68.3H104V76H60z" fill="#d6cdc2"/>
<path d="M64 76H102V83H66z" fill="#6e5e62"/>
</g></svg>
<div class="a" style="left:21px;top:397px;width:136px;height:104px;border:3.5px solid #b8462d;background:#f4ece8"></div>
<div class="a" style="left:25px;top:401px;width:128px;height:96px;background:#5b8ed6"></div>
<span class="t" style="left:10.9px;top:397.27px;font-size:13.5px;color:#a03c2a;font-weight:400;font-family:'Liberation Sans',sans-serif;transform:scaleX(0.8383);-webkit-text-stroke-width:0;">3</span>
<div class="a" style="left:24px;top:516px;width:130px;height:98px;background:#fff;border:1px solid #d3d3d3"></div>
<div class="a" style="left:25px;top:517px;width:128px;height:96px;background:#5b8ed6"></div>
<span class="t" style="left:10.7px;top:513.17px;font-size:13.5px;color:#444;font-weight:400;font-family:'Liberation Sans',sans-serif;transform:scaleX(0.8649);-webkit-text-stroke-width:0;">4</span>
<svg style="left:25px;top:517px;overflow:hidden" width="128" height="96" viewBox="0 0 128 96"><defs><filter id="thb517" x="-5%" y="-5%" width="110%" height="110%"><feGaussianBlur stdDeviation="0.5"/></filter></defs><g filter="url(#thb517)">


<path d="M36 66L42 60L46 66L50 62L54 70L48 76L40 72z" fill="#f2e35a"/>
<path d="M33 62L38 58L40 64z" fill="#e9a6d0"/>
<path d="M52 70L60 62L66 70L60 80L54 78z" fill="#ef5d5a"/>
<path d="M62 62L70 56L74 66L68 78L62 72z" fill="#f5893b"/>
<path d="M72 60L80 58L84 68L78 78L72 72z" fill="#7ec94a"/>
<path d="M82 62L90 60L92 70L86 72z" fill="#5ed0d6"/>
<path d="M92 62L100 58L104 64L96 68z" fill="#f3e05a"/>
</g></svg>
<div class="a" style="left:25px;top:169px;width:580px;height:436px;overflow:hidden;transform:scale(0.22069,0.22018);transform-origin:0 0"><div class="a" style="left:86px;top:16.6px;white-space:pre;line-height:1;font-family:'Liberation Serif';font-size:16px;color:#1f3566;font-weight:400;">Державний  торговельно - економічний  університет</div><div class="a" style="left:48px;top:78.4px;white-space:pre;line-height:1;font-family:'Liberation Sans';font-size:12.5px;color:#0c1226;font-weight:700;">ПРАВИЛЬНЕ ХАРЧУВАННЯ</div><div class="a" style="left:272px;top:78.4px;white-space:pre;line-height:1;font-family:'Liberation Sans';font-size:12.5px;color:#0c1226;font-weight:700;">ЗДОРОВИЙ СПОСІБ ЖИТТЯ СТУДЕНТА</div><div class="a" style="left:340px;top:247.1px;white-space:pre;line-height:1;font-family:'Liberation Serif';font-size:13px;color:#0a0f22;font-weight:400;-webkit-text-stroke:0.6px #0a0f22;"><b>Виконала:</b> студентка 3 курсу</div><div class="a" style="left:340px;top:262.6px;white-space:pre;line-height:1;font-family:'Liberation Serif';font-size:13px;color:#0a0f22;font-weight:400;-webkit-text-stroke:0.6px #0a0f22;">ФРГТБ гр. ФТ-71</div><div class="a" style="left:340px;top:278.1px;white-space:pre;line-height:1;font-family:'Liberation Serif';font-size:13px;color:#0a0f22;font-weight:400;-webkit-text-stroke:0.6px #0a0f22;">Полякова Дарія Вікторівна</div><div class="a" style="left:340px;top:293.6px;white-space:pre;line-height:1;font-family:'Liberation Serif';font-size:13px;color:#0a0f22;font-weight:400;-webkit-text-stroke:0.6px #0a0f22;"><b>Науковий керівник:</b> викладач</div><div class="a" style="left:340px;top:309.1px;white-space:pre;line-height:1;font-family:'Liberation Serif';font-size:13px;color:#0a0f22;font-weight:400;-webkit-text-stroke:0.6px #0a0f22;">кафедри фізичного виховання</div><div class="a" style="left:340px;top:324.6px;white-space:pre;line-height:1;font-family:'Liberation Serif';font-size:13px;color:#0a0f22;font-weight:400;-webkit-text-stroke:0.6px #0a0f22;">та спорту Сальникова Світлана</div><div class="a" style="left:340px;top:340.1px;white-space:pre;line-height:1;font-family:'Liberation Serif';font-size:13px;color:#0a0f22;font-weight:400;-webkit-text-stroke:0.6px #0a0f22;"><b>Петрівна</b></div><div class="a" style="left:236px;top:392.4px;white-space:pre;line-height:1;font-family:'Liberation Serif';font-size:15px;color:#1a2c55;font-weight:400;-webkit-text-stroke:0.5px #1a2c55;">Суми 2020</div></div>
<div class="a" style="left:25px;top:285px;width:580px;height:436px;overflow:hidden;transform:scale(0.22069,0.22018);transform-origin:0 0"><div class="a" style="left:14px;top:89.6px;white-space:pre;line-height:1;font-family:'Liberation Serif';font-size:13.6px;color:#1c2748;font-weight:400;">   Правильне харчування - харчування, яке забезпечує ріст, нормальний розвиток</div><div class="a" style="left:14px;top:114.6px;white-space:pre;line-height:1;font-family:'Liberation Serif';font-size:13.6px;color:#1c2748;font-weight:400;">і життєдіяльність людини, сприяє зміцненню здоров’я та профілактиці хвороб.</div><div class="a" style="left:14px;top:139.6px;white-space:pre;line-height:1;font-family:'Liberation Serif';font-size:13.6px;color:#1c2748;font-weight:400;">Раціональне харчування студента є важливим фактором його навчання та здоров’я.</div></div>
<div class="a" style="left:25px;top:517px;width:580px;height:436px;overflow:hidden;transform:scale(0.22069,0.22018);transform-origin:0 0"><div class="a" style="left:30px;top:92.1px;white-space:pre;line-height:1;font-family:'Liberation Serif';font-size:14.2px;color:#141c38;font-weight:400;word-spacing:6px;"><span style="background:#ecea55">Харчування</span> - це забезпечення організму поживними речовинами, що</div><div class="a" style="left:9px;top:119.1px;white-space:pre;line-height:1;font-family:'Liberation Serif';font-size:14.2px;color:#141c38;font-weight:400;word-spacing:4px;">потрібні для його життєдіяльності. Воно забезпечує ріст, енергію та підтримку</div><div class="a" style="left:9px;top:146.6px;white-space:pre;line-height:1;font-family:'Liberation Serif';font-size:14.2px;color:#141c38;font-weight:400;word-spacing:4px;">обміну речовин. Правильне харчування студента має бути збалансованим за</div><div class="a" style="left:9px;top:174.1px;white-space:pre;line-height:1;font-family:'Liberation Serif';font-size:14.2px;color:#141c38;font-weight:400;word-spacing:4px;">складом білків, жирів, вуглеводів, вітамінів і мінеральних речовин у раціоні</div><div class="a" style="left:9px;top:201.6px;white-space:pre;line-height:1;font-family:'Liberation Serif';font-size:14.2px;color:#141c38;font-weight:400;word-spacing:4px;">харчування, адже від нього залежить працездатність та стан здоров’я людини</div><div class="a" style="left:9px;top:229.1px;white-space:pre;line-height:1;font-family:'Liberation Serif';font-size:14.2px;color:#141c38;font-weight:400;word-spacing:0px;">протягом усього життя.</div></div>
<div class="a" style="left:24px;top:632px;width:130px;height:6px;background:#fff;border:1px solid #d3d3d3;border-bottom:none"></div>
<div class="a" style="left:25px;top:633px;width:128px;height:5px;background:#5b8ed6"></div>
<span class="t" style="left:10.9px;top:629.17px;font-size:13.5px;color:#444;font-weight:400;font-family:'Liberation Sans',sans-serif;transform:scaleX(0.8383);-webkit-text-stroke-width:0;">5</span>
<div class="a" style="left:399px;top:160px;width:580px;height:436px;background:#5b8ed6"></div>
<div class="a" style="left:190px;top:608px;width:1010px;height:1px;background:#c6c6c6"></div>
<span class="t" style="left:199.5px;top:616.49px;font-size:13px;color:#505050;font-weight:400;font-family:'Liberation Sans',sans-serif;transform:scaleX(0.9725);">Заметки к слайду</span>
<div class="a" style="left:1185px;top:153px;width:15px;height:438px;background:#eaeaea;border-left:1px solid #dedede"></div>
<div class="a" style="left:1186px;top:153px;width:13px;height:13px;background:#fdfdfd;border:1px solid #b9b9b9"></div>
<svg style="left:1189px;top:157.5px" width="7" height="4"><path d="M0 4L3.5 0L7 4z" fill="#555"/></svg>
<div class="a" style="left:1186px;top:242px;width:13px;height:37px;background:#fdfdfd;border:1px solid #b9b9b9"></div>
<div class="a" style="left:1186px;top:546px;width:13px;height:13px;background:#fdfdfd;border:1px solid #b9b9b9"></div>
<svg style="left:1189px;top:551px" width="7" height="4"><path d="M0 0L3.5 4L7 0z" fill="#555"/></svg>
<svg style="left:1188px;top:562px" width="9" height="26" viewBox="0 0 9 26" fill="#555"><path d="M0.5 4L4.5 0L8.5 4zM0.5 8L4.5 4L8.5 8z"/><path d="M0.5 17L4.5 21L8.5 17zM0.5 21L4.5 25L8.5 21z"/></svg>
<svg style="left:277px;top:420px" width="12" height="19" viewBox="0 0 12 19"><path d="M0.8 0.8V15.5L4.4 12.2L6.9 17.8L9.2 16.8L6.8 11.3H11.3z" fill="#fff" stroke="#333" stroke-width="1.1" stroke-linejoin="round"/></svg>
<div class="a" style="left:399px;top:160px;width:580px;height:436px;overflow:hidden"><div class="sl" style="left:12.7px;top:99.64px"><span class="u">Зміна</span> характеру <span class="u">харчування</span>, <span class="u">порушення</span> <span class="u">режиму</span></div><div class="sl" style="left:12.7px;top:116.74px"><span class="u">харчування</span>, <span class="u">малорухомий</span> спосіб життя- <span class="u">це</span> все</div><div class="sl" style="left:12.7px;top:133.84px"><span class="u">може</span> <span class="u">призвести</span> до <span class="u">захворювань</span>, <span class="u">нервових</span> <span class="u">стресів</span></div><div class="sl" style="left:12.7px;top:151.04px">та <span class="u">неврозів</span>, <span class="u">втомлюваності</span> та поганого <span class="u">засвоєння</span></div><div class="sl" style="left:12.7px;top:168.14px"><span class="u">матеріалу</span>, <span class="u">що</span> у свою <span class="u">чергу</span> веде до <span class="u">неякісної</span></div><div class="sl" style="left:12.7px;top:185.24px"><span class="u">підготовки</span> <span class="u">майбутнього</span> <span class="u">спеціаліста</span>.</div><div class="sl" style="left:12.7px;top:221.84px"> <span class="u">Щоб</span> <span class="u">зпробігти</span> <span class="u">цьому</span> необхідно <span class="u">збалансоване</span> та</div><div class="sl" style="left:12.7px;top:238.24px"><span class="u">раціональне</span> <span class="u">харчування</span> – <span class="u">основний</span> <span class="u">фізіологічний</span></div><div class="sl" style="left:12.7px;top:254.94px">фактор <span class="u">зміцнення</span> <span class="u">здоров’я</span> <span class="u">людини</span>.</div><div class="sl" style="left:12.7px;top:291.24px"><span class="u">Багато</span> <span class="u">молодих</span> людей не <span class="u">знають</span>, як правильно</div><div class="sl" style="left:12.7px;top:307.34px"><span class="u">харчуватися</span>, і тим самим <span class="u">послаблюють</span> <span class="u">свій</span></div><div class="sl" style="left:12.7px;top:324.34px"><span class="u">імунітет</span>, <span class="u">піддаючи</span> організм <span class="u">небезпеці</span>.</div><svg style="left:0;top:0" width="580" height="436" viewBox="399 160 580 436">
<path d="M803 309.6C827 309.6 847.3 327 847.3 350C847.3 366 841 377 832 387C823 396 812 401 805.5 403.5H799.5C793 401 782 396 773 387C764 377 757.7 366 757.7 352C757.7 327 779 309.6 803 309.6z" fill="#d8493d" stroke="#bf4238" stroke-width="1"/>
<path d="M799 403.5H807L803 408.5z" fill="#c9443a"/>
<path d="M803 408V423.5" stroke="#6a4a46" stroke-width="1"/>
<path d="M766.4 340C768 330 776 321 788.5 318.3" fill="none" stroke="#f1c6bf" stroke-width="4" stroke-linecap="round"/>
<g transform="translate(845 320)">
<g stroke="#f6e9d8" stroke-width="7" stroke-linecap="round" fill="none">
<path d="M56 28L28 14"/><path d="M58 25L35 11.5"/><path d="M61 23L44 10.5"/></g>
<g stroke="#eed4b4" stroke-width="5.6" stroke-linecap="round" fill="none">
<path d="M56 28L28 14"/><path d="M58 25L35 11.5"/><path d="M61 23L44 10.5"/></g>
<path d="M33 19.5L49 27" stroke="#e2c6a2" stroke-width="0.7"/>
<path d="M38 15.5L53 24" stroke="#e2c6a2" stroke-width="0.7"/>
<path d="M46 22C55 20 63 25 67 32L71.6 35.3V59.6C61 59.5 51 57 43 53.5C35 50 28 47 25 43C22 38 23 32 27 28C31 24.5 38 22.5 46 22z" fill="#eed4b4" stroke="#f6e9d8" stroke-width="0.8"/>
<ellipse cx="40.5" cy="38.3" rx="8" ry="7.2" fill="#5b8ed6" stroke="#f3e2cc" stroke-width="0.8"/>
<path d="M8.8 40H33.5" stroke="#eef2f6" stroke-width="1.1"/>
<circle cx="34.2" cy="40.3" r="1.2" fill="#d84a3e"/>
<path d="M6.5 36.5L9 34M9.5 38.5L12.5 35.5M12 39L14.5 37.5" stroke="#e7eef7" stroke-width="0.9"/>
<rect x="70.2" y="35" width="5" height="25" fill="#f4ece6"/>
<rect x="74.7" y="33.4" width="41" height="27.3" fill="#242424"/>
<ellipse cx="82" cy="57.5" rx="1.8" ry="1.5" fill="#f4f4f4"/><ellipse cx="90" cy="57.5" rx="1.8" ry="1.5" fill="#f4f4f4"/>
</g>
</svg><span class="t" style="left:368.5px;top:184.69px;font-size:19.5px;color:#fff;font-weight:700;transform:scaleX(0.9103);-webkit-text-stroke-width:1.1px">STRESS</span></div>
<div class="a" style="left:25px;top:401px;width:580px;height:436px;background:#5b8ed6;overflow:hidden;transform:scale(0.22069,0.22018);transform-origin:0 0"><div class="sl" style="left:12.7px;top:99.64px">Зміна характеру харчування, порушення режиму</div><div class="sl" style="left:12.7px;top:116.74px">харчування, малорухомий спосіб життя- це все</div><div class="sl" style="left:12.7px;top:133.84px">може призвести до захворювань, нервових стресів</div><div class="sl" style="left:12.7px;top:151.04px">та неврозів, втомлюваності та поганого засвоєння</div><div class="sl" style="left:12.7px;top:168.14px">матеріалу, що у свою чергу веде до неякісної</div><div class="sl" style="left:12.7px;top:185.24px">підготовки майбутнього спеціаліста.</div><div class="sl" style="left:12.7px;top:221.84px"> Щоб зпробігти цьому необхідно збалансоване та</div><div class="sl" style="left:12.7px;top:238.24px">раціональне харчування – основний фізіологічний</div><div class="sl" style="left:12.7px;top:254.94px">фактор зміцнення здоров’я людини.</div><div class="sl" style="left:12.7px;top:291.24px">Багато молодих людей не знають, як правильно</div><div class="sl" style="left:12.7px;top:307.34px">харчуватися, і тим самим послаблюють свій</div><div class="sl" style="left:12.7px;top:324.34px">імунітет, піддаючи організм небезпеці.</div><svg style="left:0;top:0" width="580" height="436" viewBox="399 160 580 436">
<path d="M803 309.6C827 309.6 847.3 327 847.3 350C847.3 366 841 377 832 387C823 396 812 401 805.5 403.5H799.5C793 401 782 396 773 387C764 377 757.7 366 757.7 352C757.7 327 779 309.6 803 309.6z" fill="#d8493d" stroke="#bf4238" stroke-width="1"/>
<path d="M799 403.5H807L803 408.5z" fill="#c9443a"/>
<path d="M803 408V423.5" stroke="#6a4a46" stroke-width="1"/>
<path d="M766.4 340C768 330 776 321 788.5 318.3" fill="none" stroke="#f1c6bf" stroke-width="4" stroke-linecap="round"/>
<g transform="translate(845 320)">
<g stroke="#f6e9d8" stroke-width="7" stroke-linecap="round" fill="none">
<path d="M56 28L28 14"/><path d="M58 25L35 11.5"/><path d="M61 23L44 10.5"/></g>
<g stroke="#eed4b4" stroke-width="5.6" stroke-linecap="round" fill="none">
<path d="M56 28L28 14"/><path d="M58 25L35 11.5"/><path d="M61 23L44 10.5"/></g>
<path d="M33 19.5L49 27" stroke="#e2c6a2" stroke-width="0.7"/>
<path d="M38 15.5L53 24" stroke="#e2c6a2" stroke-width="0.7"/>
<path d="M46 22C55 20 63 25 67 32L71.6 35.3V59.6C61 59.5 51 57 43 53.5C35 50 28 47 25 43C22 38 23 32 27 28C31 24.5 38 22.5 46 22z" fill="#eed4b4" stroke="#f6e9d8" stroke-width="0.8"/>
<ellipse cx="40.5" cy="38.3" rx="8" ry="7.2" fill="#5b8ed6" stroke="#f3e2cc" stroke-width="0.8"/>
<path d="M8.8 40H33.5" stroke="#eef2f6" stroke-width="1.1"/>
<circle cx="34.2" cy="40.3" r="1.2" fill="#d84a3e"/>
<path d="M6.5 36.5L9 34M9.5 38.5L12.5 35.5M12 39L14.5 37.5" stroke="#e7eef7" stroke-width="0.9"/>
<rect x="70.2" y="35" width="5" height="25" fill="#f4ece6"/>
<rect x="74.7" y="33.4" width="41" height="27.3" fill="#242424"/>
<ellipse cx="82" cy="57.5" rx="1.8" ry="1.5" fill="#f4f4f4"/><ellipse cx="90" cy="57.5" rx="1.8" ry="1.5" fill="#f4f4f4"/>
</g>
</svg><span class="t" style="left:368.5px;top:184.69px;font-size:19.5px;color:#fff;font-weight:700;transform:scaleX(0.9103);-webkit-text-stroke-width:1.1px">STRESS</span></div>
<span class="t" style="left:7.0px;top:642.29px;font-size:11px;color:#4a4a4a;font-weight:400;font-family:'Liberation Sans',sans-serif;transform:scaleX(0.8500);">Слайд 3 из 10</span>
<svg style="left:86px;top:642px" width="14" height="11" viewBox="0 0 14 11" fill="none" stroke="#777" stroke-width="1"><path d="M0.5 1.5C2 0.8 4 0.8 5.5 1.5V10.5C4 9.8 2 9.8 0.5 10.5zM5.5 1.5C6.5 0.8 7.5 0.8 8 1M5.5 10.5C6.5 9.8 7.5 9.8 8.5 10.2"/><path d="M9 2L13 7M13 2L9 7" stroke="#555"/></svg>
<span class="t" style="left:113.0px;top:642.29px;font-size:11px;color:#4a4a4a;font-weight:400;font-family:'Liberation Sans',sans-serif;transform:scaleX(0.9137);">английский (США)</span>
<svg style="left:728px;top:642px" width="11" height="10" viewBox="0 0 11 10" fill="#777"><path d="M3 2.5L5.5 0L8 2.5z"/><rect x="0" y="4" width="11" height="1"/><rect x="0" y="6.5" width="11" height="1"/><rect x="0" y="9" width="11" height="1"/></svg>
<span class="t" style="left:742.0px;top:642.29px;font-size:11px;color:#4a4a4a;font-weight:400;font-family:'Liberation Sans',sans-serif;transform:scaleX(0.9126);">Заметки</span>
<svg style="left:799px;top:643px" width="11" height="10" viewBox="0 0 11 10"><path d="M0 0H11V6.5H6L3 9.5V6.5H0z" fill="#6a6a6a"/></svg>
<span class="t" style="left:813.6px;top:642.29px;font-size:11px;color:#4a4a4a;font-weight:400;font-family:'Liberation Sans',sans-serif;transform:scaleX(0.9446);">Примечания</span>
<div class="a" style="left:891px;top:639px;width:33px;height:18px;background:#c8c8c8"></div>
<svg style="left:901px;top:641px" width="14" height="14" viewBox="0 0 14 14" fill="none" stroke="#6a6a6a" stroke-width="1"><rect x="0.5" y="0.5" width="13" height="13"/><path d="M3.5 0.5V13.5"/><rect x="5.5" y="3.5" width="6" height="5"/><path d="M5.5 11H11.5"/></svg>
<svg style="left:935px;top:642px" width="12" height="11" viewBox="0 0 12 11" fill="none" stroke="#6a6a6a" stroke-width="1"><rect x="0.5" y="0.5" width="4" height="3.5"/><rect x="7.5" y="0.5" width="4" height="3.5"/><rect x="0.5" y="6.5" width="4" height="3.5"/><rect x="7.5" y="6.5" width="4" height="3.5"/></svg>
<svg style="left:968px;top:641px" width="13" height="12" viewBox="0 0 13 12" fill="none" stroke="#6a6a6a" stroke-width="1"><path d="M0.5 0.5H5.5L6.5 1.5L7.5 0.5H12.5V11H7.5L6.5 11.5L5.5 11H0.5z"/><path d="M6.5 1.5V11M2 3H5M2 5H5M2 7H5M8 3H11M8 5H11M8 7H11" stroke-width="0.8"/></svg>
<svg style="left:1001px;top:642px" width="13" height="12" viewBox="0 0 13 12" fill="none" stroke="#6a6a6a" stroke-width="1"><path d="M0 0.5H13"/><rect x="1.5" y="1.5" width="10" height="5"/><path d="M6.5 6.5V10M4 11.5H9"/></svg>
<div class="a" style="left:1029px;top:647px;width:5px;height:1.5px;background:#555"></div>
<div class="a" style="left:1038px;top:647px;width:87px;height:1px;background:#b4b4b4"></div>
<div class="a" style="left:1081px;top:645px;width:1px;height:5px;background:#b4b4b4"></div>
<div class="a" style="left:1066px;top:643px;width:3px;height:9px;background:#6e6e6e"></div>
<div class="a" style="left:1129px;top:646.5px;width:7px;height:1.5px;background:#555"></div>
<div class="a" style="left:1131.75px;top:643.5px;width:1.5px;height:7.5px;background:#555"></div>
<span class="t" style="left:1149.0px;top:642.29px;font-size:11px;color:#4a4a4a;font-weight:400;font-family:'Liberation Sans',sans-serif;transform:scaleX(0.8374);">69 %</span>
<svg style="left:1182px;top:640px" width="13" height="14" viewBox="0 0 13 14" fill="none" stroke="#6a6a6a" stroke-width="1"><rect x="0.5" y="0.5" width="12" height="13"/><path d="M3 3L5 5M10 3L8 5M3 11L5 9M10 11L8 9"/><path d="M3 3H5M3 3V5M10 3H8M10 3V5M3 11H5M3 11V9M10 11H8M10 11V9" stroke-width="1.2"/></svg>
<div class="a" style="left:979px;top:120px;width:201px;height:453px;background:#242424;border-radius:3px;box-shadow:0 2px 4px rgba(0,0,0,.25)"></div>
<svg style="left:1044px;top:143px;overflow:hidden" width="71" height="71" viewBox="0 0 71 71">
<defs><filter id="bl1" x="-10%" y="-10%" width="120%" height="120%"><feGaussianBlur stdDeviation="1.3"/></filter></defs>
<rect width="71" height="71" fill="#e39a0e"/>
<g filter="url(#bl1)">
<path d="M-3 10C8 16 14 14 18 20C24 34 26 52 28 75H-3z" fill="#d48c0b"/>
<path d="M4 0H30C31 20 38 45 44 75H28C26 55 20 34 12 20C9 14 6 8 4 0z" fill="#fdc21a"/>
<path d="M4 0H20C18 6 14 10 10 14C7 10 5 5 4 0z" fill="#ffd43a"/>
<path d="M22 0H30C31 22 35 48 38 75H33C30 50 26 26 22 0z" fill="#ffd84a" opacity="0.7"/>
<path d="M35 -2H42C40 12 41 28 46 58C41 46 37 28 35 -2z" fill="#cf240c"/>
<path d="M42 0H74V75H52C50 55 46 38 44 25C43 15 42 8 42 0z" fill="#eb9f12"/>
<path d="M46 0H60C58 20 56 40 58 75H52C50 50 48 25 46 0z" fill="#f4ae22"/>
<path d="M62 0H74V75H64C66 50 66 25 62 0z" fill="#dc900d"/>
</g></svg>
<svg style="left:984px;top:220px" width="13" height="12" viewBox="0 0 13 12"><path d="M4.5 1.5A2 2 0 0 1 8.5 1.5V6A2 2 0 0 1 4.5 6z" fill="#e0433a"/><path d="M2.5 5.5A4 4 0 0 0 10.5 5.5M6.5 9.5V11.5M4 11.5H9" stroke="#e0433a" stroke-width="1.1" fill="none"/><path d="M1 11L12 1" stroke="#e0433a" stroke-width="1.4"/></svg>
<span class="t" style="left:1000.5px;top:220.39px;font-size:11px;color:#e9e9e9;font-weight:400;font-family:'Liberation Sans',sans-serif;transform:scaleX(0.9957);">Світлана Парфілова</span>
<svg style="left:981px;top:236px;overflow:hidden" width="198" height="111" viewBox="0 0 198 111">
<defs><filter id="bl2" x="-5%" y="-5%" width="110%" height="110%"><feGaussianBlur stdDeviation="1.1"/></filter>
<linearGradient id="wall1" x1="0" x2="1"><stop offset="0" stop-color="#d8ccb6"/><stop offset="0.4" stop-color="#e2d9bf"/><stop offset="1" stop-color="#e6ddc0"/></linearGradient>
<linearGradient id="ceil1" x1="0" x2="1"><stop offset="0" stop-color="#9c928c"/><stop offset="0.5" stop-color="#b3aaa2"/><stop offset="0.78" stop-color="#bdb2a6"/><stop offset="0.8" stop-color="#a07c58"/><stop offset="1" stop-color="#b08a62"/></linearGradient></defs>
<rect width="198" height="111" fill="url(#wall1)"/>
<g filter="url(#bl2)">
<path d="M-5 -5H203V8L99.4 17.4L23.3 27.6L-5 16z" fill="url(#ceil1)"/>
<path d="M-5 17L23.3 27.6L99.4 17.4L203 8" fill="none" stroke="#eee8da" stroke-width="2.5"/>
<path d="M-5 19V115H23V28z" fill="#cfc2ac"/>
<rect x="34.3" y="27.6" width="57.5" height="65" fill="#b2aaa0"/>
<rect x="37" y="31" width="52" height="61" fill="#e4e0d8"/>
<g fill="#6b5e4c"><rect x="40" y="40" width="6" height="9"/><rect x="52" y="43" width="5" height="6"/><rect x="66" y="37" width="6" height="12"/><rect x="58" y="56" width="12" height="11" fill="#9c8a54"/><rect x="40" y="60" width="5" height="8"/><rect x="76" y="59" width="6" height="8"/><rect x="38" y="73" width="9" height="17" fill="#2c2c34"/><rect x="51" y="77" width="7" height="8" fill="#8c8478"/><rect x="84" y="62" width="7" height="28" fill="#c8c2ba"/></g>
<path d="M37 51H89M37 70H89" stroke="#a9a39a" stroke-width="1.2"/>
<rect x="129.75" y="36" width="28.75" height="19.4" fill="#2e2a26"/><rect x="132.5" y="39" width="23" height="13.5" fill="#b9c2c8"/>
<path d="M70 115C72 98 80 90 96 87C110 85 130 86 146 90C156 94 162 104 164 115z" fill="#1d1c20"/>
<path d="M114 88L124 108L134 88z" fill="#eceff2"/>
<path d="M92.6 48.7C92 38 100 32 112.9 32C126 32 133 40 133 48.7C136 60 139 70 140 76C142 82 144 86 146 90C130 94 110 94 86 92.6C90 80 91 62 92.6 48.7z" fill="#2a2224"/>
<ellipse cx="113" cy="58" rx="13.5" ry="17" fill="#d6b6a6"/>
<path d="M98 46C102 38 118 34 128 42L129 48C120 41 106 42 98 52z" fill="#2a2224"/>
<rect x="107" y="72" width="13" height="14" fill="#caa898"/>
</g></svg>
<div class="a" style="left:981px;top:329px;width:116px;height:17px;background:rgba(30,30,30,.55)"></div>
<span class="t" style="left:985.0px;top:331.99px;font-size:11px;color:#ececec;font-weight:400;font-family:'Liberation Sans',sans-serif;transform:scaleX(0.9976);">Світлана Сальникова</span>
<div class="a" style="left:980px;top:346.5px;width:200px;height:113px;border:1.5px solid #a9b56f"></div>
<svg style="left:981.5px;top:348px;overflow:hidden" width="197" height="110" viewBox="0 0 197 110">
<defs><filter id="bl3" x="-5%" y="-5%" width="110%" height="110%"><feGaussianBlur stdDeviation="1.2"/></filter>
<linearGradient id="win" x1="0" x2="1"><stop offset="0" stop-color="#dfe5e8"/><stop offset="1" stop-color="#f5f7f7"/></linearGradient>
<linearGradient id="bw" x1="0" x2="1"><stop offset="0" stop-color="#26446e"/><stop offset="0.7" stop-color="#2c4c78"/><stop offset="1" stop-color="#24395e"/></linearGradient></defs>
<rect width="197" height="110" fill="url(#bw)"/>
<g filter="url(#bl3)">
<rect x="0" y="-5" width="128" height="120" fill="url(#bw)"/>
<rect x="128" y="-5" width="74" height="120" fill="url(#win)"/>
<rect x="126" y="-5" width="21" height="120" fill="#8e969e"/>
<path d="M-5 76L54 73L60 96H-5z" fill="#e8eaec"/>
<path d="M26 75L28 95" stroke="#9aa0a8" stroke-width="1.2"/>
<path d="M158 52C164 50 168 58 166 70L162 88L154 80z" fill="#a4aab0"/>
<rect x="144" y="88" width="58" height="27" fill="#434a52"/>
<path d="M34 115C42 96 56 82 72 76H126C140 80 160 92 172 115z" fill="#15161a"/>
<path d="M78.3 15.2C80 6 88 2 94 2C104 2 112 5 114.4 8.3C120 18 124 30 124.7 41C127 54 132 64 135 72C137 80 138 88 138.5 94C126 96 116 92 108 86L82 86C78 88 75 88 73 87C71 80 70 74 69.7 70C70 60 71 50 71.4 49.6C72 36 76 24 78.3 15.2z" fill="#47312f"/>
<ellipse cx="95.5" cy="42" rx="14" ry="22" fill="#dcc0b2"/>
<path d="M80 28C84 16 100 12 112 22L114 30C104 20 90 20 80 36z" fill="#47312f"/>
<rect x="86" y="60" width="18" height="12" fill="#cfb2a4"/>
<ellipse cx="95" cy="56" rx="5" ry="2.2" fill="#9e6c64"/>
</g></svg>
<div class="a" style="left:981.5px;top:441.5px;width:91px;height:16.5px;background:rgba(30,30,30,.55)"></div>
<span class="t" style="left:985.0px;top:445.39px;font-size:11px;color:#ececec;font-weight:400;font-family:'Liberation Sans',sans-serif;transform:scaleX(1.0481);">Даша Полякова</span>
<svg style="left:1044px;top:481px;overflow:hidden" width="72" height="70" viewBox="0 0 72 70">
<defs><filter id="bl4" x="-10%" y="-10%" width="120%" height="120%"><feGaussianBlur stdDeviation="1"/></filter></defs>
<rect width="72" height="70" fill="#d9d6da"/>
<g filter="url(#bl4)">
<rect x="-3" y="-3" width="20" height="76" fill="#c8c4c8"/>
<path d="M36 -3H44L62 28L58 32z" fill="#1b1b1e"/>
<path d="M50 -3H56L74 24V34z" fill="#2a2a2e"/>
<path d="M44 -3H50L70 30L64 32z" fill="#f2f2f4"/>
<path d="M-3 34L4 32L40 72H30z" fill="#19191c"/>
<path d="M6 44L12 42L34 72H24z" fill="#f0eef0"/>
<ellipse cx="10" cy="20" rx="10" ry="9" fill="#7c2636"/>
<ellipse cx="20" cy="29" rx="5" ry="5" fill="#5a2028"/>
<path d="M26 24C26 40 30 60 32 72H74V34C66 28 56 24 46 24z" fill="#e394c3"/>
<path d="M52 28C62 32 70 40 74 50V72H58C56 56 54 40 52 28z" fill="#eeb0d4"/>
<path d="M28 27L40 28L36 38L30 36z" fill="#1f1c1e"/>
<ellipse cx="31" cy="20" rx="8.5" ry="11" fill="#e6cdc4"/>
<path d="M22 14C22 5 30 1 36 3C41 5 42 10 40 14C36 9 28 8 22 16z" fill="#2a1f20"/>
</g></svg>
<div class="a" style="left:981px;top:553px;width:99px;height:19px;background:rgba(40,40,40,.6)"></div>
<svg style="left:984px;top:558px" width="13" height="12" viewBox="0 0 13 12"><path d="M4.5 1.5A2 2 0 0 1 8.5 1.5V6A2 2 0 0 1 4.5 6z" fill="#e0433a"/><path d="M2.5 5.5A4 4 0 0 0 10.5 5.5M6.5 9.5V11.5M4 11.5H9" stroke="#e0433a" stroke-width="1.1" fill="none"/><path d="M1 11L12 1" stroke="#e0433a" stroke-width="1.4"/></svg>
<span class="t" style="left:1000.0px;top:557.39px;font-size:11px;color:#e9e9e9;font-weight:400;font-family:'Liberation Sans',sans-serif;transform:scaleX(1.0396);">Альона Дриль</span>
</body></html>
